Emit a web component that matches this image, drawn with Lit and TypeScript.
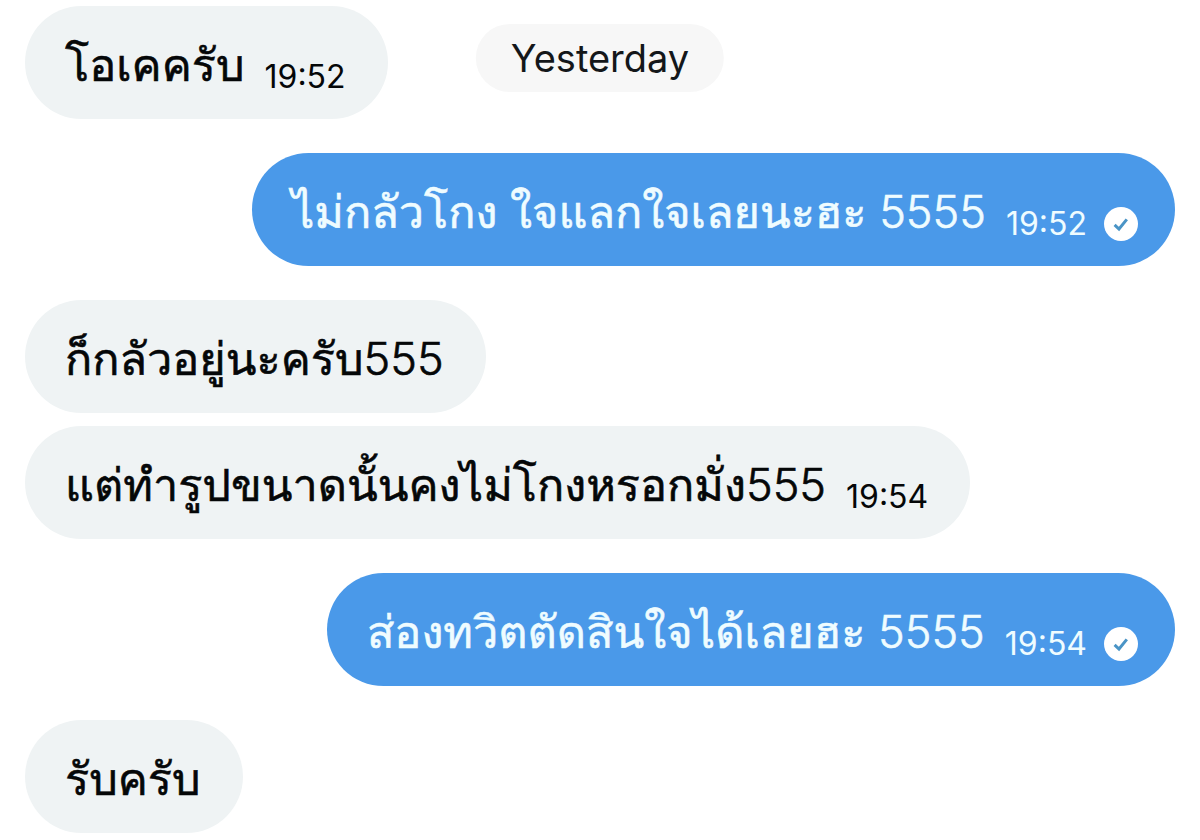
import { LitElement, html, css, nothing } from "lit";
import { customElement, property } from "lit/decorators.js";
import { classMap } from "lit/directives/class-map.js";

interface Message {
  text: string;
  time?: string;
  sent?: boolean;
}

const groups: Message[][] = [
  [{ text: "โอเคครับ", time: "19:52" }],
  [{ text: "ไม่กลัวโกง ใจแลกใจเลยนะฮะ 5555", time: "19:52", sent: true }],
  [
    { text: "ก็กลัวอยู่นะครับ555" },
    { text: "แต่ทำรูปขนาดนั้นคงไม่โกงหรอกมั่ง555", time: "19:54" },
  ],
  [{ text: "ส่องทวิตตัดสินใจได้เลยฮะ 5555", time: "19:54", sent: true }],
  [{ text: "รับครับ" }],
];

@customElement("chat-bubble")
class ChatBubble extends LitElement {
  static styles = css`
    :host {
      display: flex;
    }
    .bubble {
      display: flex;
      align-items: flex-end;
      gap: 20px;
      padding: 26px 42px 22px 40px;
      border-radius: 57px;
      background: #eff3f4;
      color: #050708;
    }
    .sent {
      margin-left: auto;
      padding-right: 37px;
      background: #4a99e9;
      color: #effcff;
    }
    .text {
      margin: 0;
      font-size: 45px;
      font-weight: 350;
      line-height: 65px;
      -webkit-text-stroke: 0.6px currentColor;
    }
    .meta {
      display: flex;
      align-items: center;
      gap: 17px;
      font-size: 32px;
      line-height: 40px;
      white-space: nowrap;
    }
    .check {
      display: block;
      width: 34px;
      height: 34px;
    }
  `;

  @property({ attribute: false }) message!: Message;

  render() {
    const { text, time, sent } = this.message;
    return html`
      <div class=${classMap({ bubble: true, sent: !!sent })}>
        <p class="text">${text}</p>
        ${time
          ? html`<div class="meta">
              <time>${time}</time>
              ${sent
                ? html`<svg class="check" viewBox="0 0 34 34" role="img" aria-label="Sent">
                    <circle cx="17" cy="17" r="17" fill="#fff" />
                    <path
                      d="M10.6 17.8 15 22 22.8 12.4"
                      fill="none"
                      stroke="#4a94c6"
                      stroke-width="3"
                    />
                  </svg>`
                : nothing}
            </div>`
          : nothing}
      </div>
    `;
  }
}

@customElement("app-root")
class AppRoot extends LitElement {
  static styles = css`
    :host {
      display: block;
      position: relative;
      background: #fff;
      font-family: Inter, Loma, "Liberation Sans", sans-serif;
    }
    .thread {
      display: flex;
      flex-direction: column;
      gap: 34px;
      padding: 6px 25px;
    }
    .group {
      display: flex;
      flex-direction: column;
      gap: 13px;
    }
    .day {
      position: absolute;
      top: 24px;
      left: 50%;
      transform: translateX(-50%);
      padding: 0 35px;
      border-radius: 34px;
      background: #f7f7f7;
      color: #14171a;
      font-size: 38px;
      line-height: 68px;
    }
  `;

  render() {
    return html`
      <main class="thread">
        ${groups.map(
          (group) => html`<section class="group">
            ${group.map((m) => html`<chat-bubble .message=${m}></chat-bubble>`)}
          </section>`
        )}
      </main>
      <div class="day">Yesterday</div>
    `;
  }
}
